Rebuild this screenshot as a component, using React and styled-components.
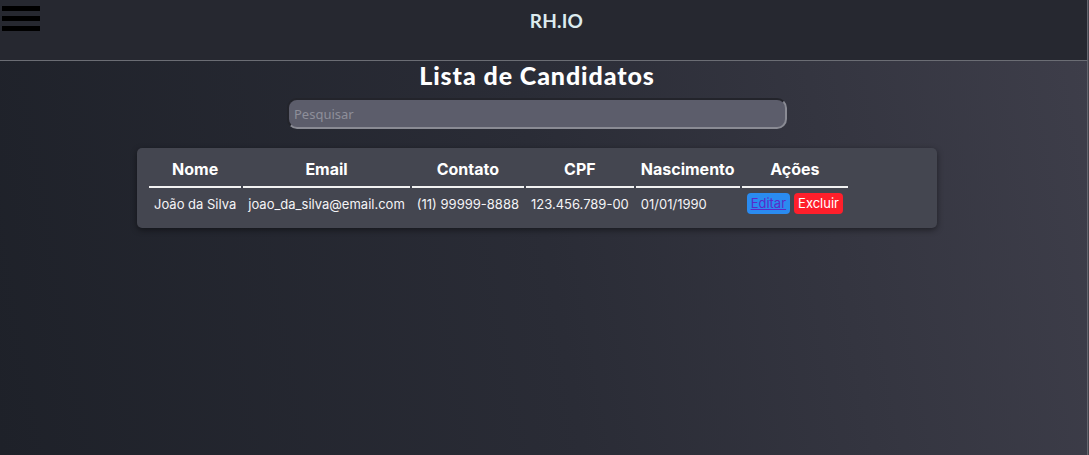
import styled, { createGlobalStyle } from "styled-components";

const GlobalStyle = createGlobalStyle`
  html, body {
    margin: 0;
    padding: 0;
    height: 100%;
  }
  body {
    background: #44454c;
    font-family: "Inter", "Liberation Sans", sans-serif;
  }
`;

const Page = styled.div`
  width: 1087px;
  min-height: 455px;
  border-right: 1px solid #64666f;
  background: linear-gradient(80deg, #1e2129 0%, #2a2c36 50%, #3e3e4a 100%);
  display: flex;
  flex-direction: column;
`;

const Header = styled.header`
  height: 60px;
  background-color: #262830;
  border-bottom: 1px solid #6b6d74;
  position: relative;
  display: flex;
  align-items: center;
  justify-content: center;
`;

const Burger = styled.button`
  position: absolute;
  left: 2px;
  top: 6px;
  width: 38px;
  padding: 0;
  border: 0;
  background: none;
  display: flex;
  flex-direction: column;
  gap: 5px;
  cursor: pointer;
  & span {
    display: block;
    height: 5px;
    background: #000;
  }
`;

const Brand = styled.h1`
  margin: 0 0 0 26px;
  padding-bottom: 20px;
  font-family: "Lato", "Open Sans", sans-serif;
  font-weight: 700;
  font-size: 19px;
  color: #dcebee;
  letter-spacing: 0.2px;
`;

const Main = styled.main`
  display: flex;
  flex-direction: column;
  align-items: center;
  padding-right: 13px;
`;

const Title = styled.h2`
  margin: 0 0 9px;
  font-family: "Lato", "Open Sans", sans-serif;
  font-weight: 900;
  font-size: 25px;
  line-height: 28px;
  color: #ffffff;
  letter-spacing: 0.9px;
`;

const Search = styled.input`
  box-sizing: border-box;
  width: 500px;
  height: 31px;
  padding: 0 5px;
  border-radius: 10px;
  border: 2px solid;
  border-color: #23242b #8a8b94 #8a8b94 #23242b;
  background: #5c5d6b;
  color: #e8e8ee;
  font-family: "Noto Sans", "Inter", sans-serif;
  font-size: 13px;
  outline: none;
  &::placeholder {
    color: #8e8f9a;
  }
`;

const Card = styled.div`
  box-sizing: border-box;
  width: 800px;
  margin-top: 19px;
  padding: 6px 10px 9px;
  background: #444650;
  border-radius: 5px;
  box-shadow: 0 2px 6px rgba(0, 0, 0, 0.45);
`;

const Table = styled.table`
  border-spacing: 2px;
  color: #ffffff;
`;

const Th = styled.th`
  padding: 4px 5px 7px;
  font-size: 16px;
  font-weight: 700;
  line-height: 19px;
  border-bottom: 2px solid #f2f2f2;
  white-space: nowrap;
`;

const Td = styled.td`
  padding: 3px 5px;
  font-size: 13px;
  line-height: 16px;
  color: #f4f4f6;
  white-space: nowrap;
`;

const Actions = styled.div`
  display: flex;
  gap: 4px;
`;

const Btn = styled.a`
  display: inline-block;
  padding: 2px 4px;
  border-radius: 4px;
  font-size: 13px;
  line-height: 17px;
  cursor: pointer;
  background: ${(p) => (p.$danger ? "#ff1f2b" : "#2a8bf0")};
  color: ${(p) => (p.$danger ? "#ffffff" : "#5a2ac8")};
  text-decoration: ${(p) => (p.$danger ? "none" : "underline")};
`;

const candidatos = [
  {
    nome: "João da Silva",
    email: "joao_da_silva@email.com",
    contato: "(11) 99999-8888",
    cpf: "123.456.789-00",
    nascimento: "01/01/1990",
  },
];

export default function App() {
  return (
    <>
      <GlobalStyle />
      <Page>
        <Header>
          <Burger aria-label="menu">
            <span />
            <span />
            <span />
          </Burger>
          <Brand>RH.IO</Brand>
        </Header>
        <Main>
          <Title>Lista de Candidatos</Title>
          <Search placeholder="Pesquisar" />
          <Card>
            <Table>
              <thead>
                <tr>
                  <Th>Nome</Th>
                  <Th>Email</Th>
                  <Th>Contato</Th>
                  <Th>CPF</Th>
                  <Th>Nascimento</Th>
                  <Th>Ações</Th>
                </tr>
              </thead>
              <tbody>
                {candidatos.map((c) => (
                  <tr key={c.cpf}>
                    <Td>{c.nome}</Td>
                    <Td>{c.email}</Td>
                    <Td>{c.contato}</Td>
                    <Td>{c.cpf}</Td>
                    <Td>{c.nascimento}</Td>
                    <Td>
                      <Actions>
                        <Btn href="#">Editar</Btn>
                        <Btn $danger>Excluir</Btn>
                      </Actions>
                    </Td>
                  </tr>
                ))}
              </tbody>
            </Table>
          </Card>
        </Main>
      </Page>
    </>
  );
}
